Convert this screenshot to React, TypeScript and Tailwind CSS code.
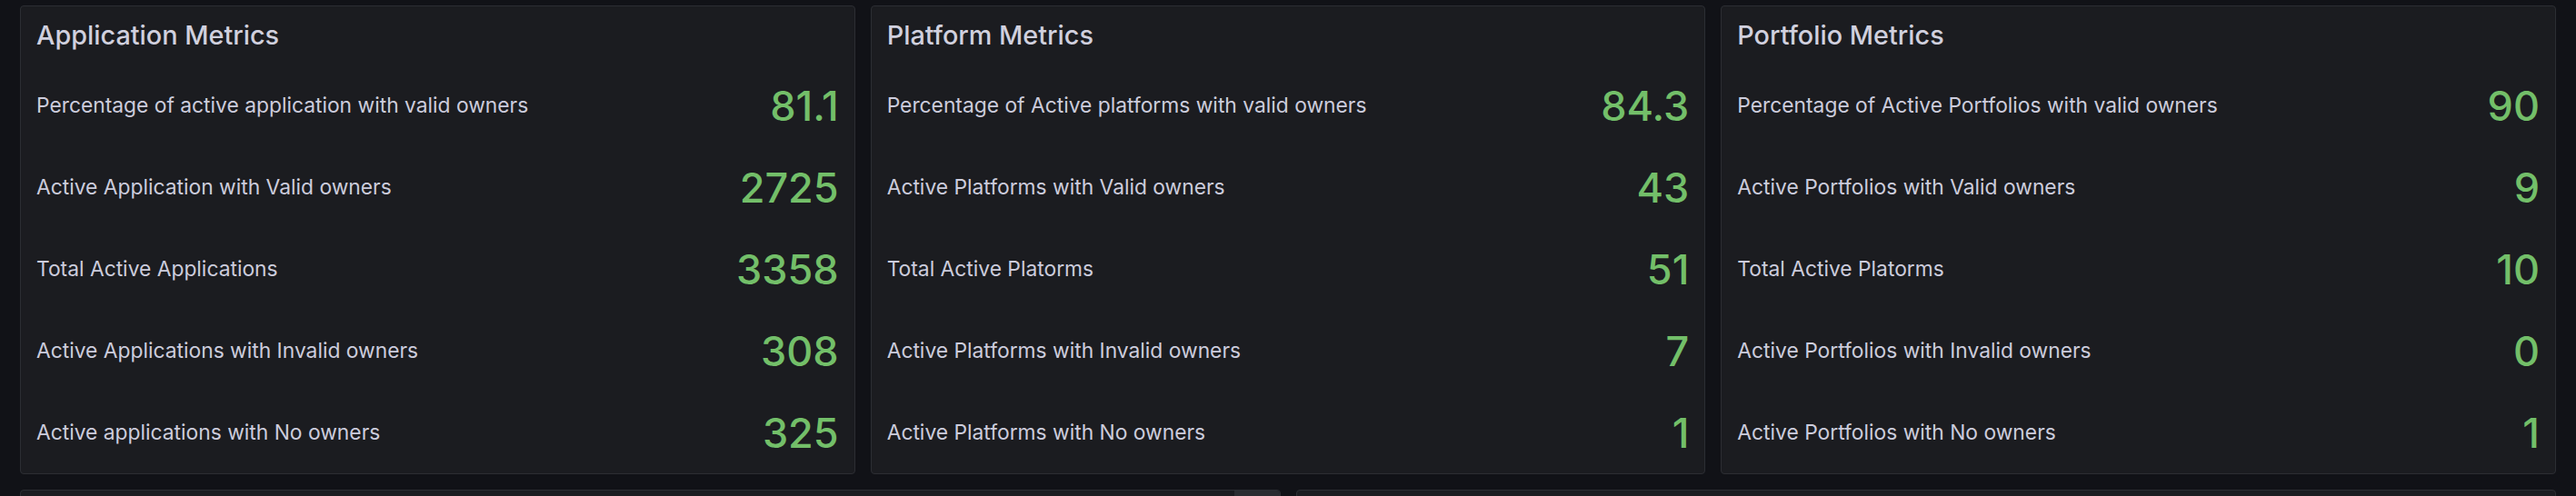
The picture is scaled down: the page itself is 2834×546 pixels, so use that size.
import React from 'react';

type Metric = { label: string; value: string };

const panels: { title: string; rows: Metric[] }[] = [
  {
    title: 'Application Metrics',
    rows: [
      { label: 'Percentage of active application with valid owners', value: '81.1' },
      { label: 'Active Application with Valid owners', value: '2725' },
      { label: 'Total Active Applications', value: '3358' },
      { label: 'Active Applications with Invalid owners', value: '308' },
      { label: 'Active applications with No owners', value: '325' },
    ],
  },
  {
    title: 'Platform Metrics',
    rows: [
      { label: 'Percentage of Active platforms with valid owners', value: '84.3' },
      { label: 'Active Platforms with Valid owners', value: '43' },
      { label: 'Total Active Platorms', value: '51' },
      { label: 'Active Platforms with Invalid owners', value: '7' },
      { label: 'Active Platforms with No owners', value: '1' },
    ],
  },
  {
    title: 'Portfolio Metrics',
    rows: [
      { label: 'Percentage of Active Portfolios with valid owners', value: '90' },
      { label: 'Active Portfolios with Valid owners', value: '9' },
      { label: 'Total Active Platorms', value: '10' },
      { label: 'Active Portfolios with Invalid owners', value: '0' },
      { label: 'Active Portfolios with No owners', value: '1' },
    ],
  },
];

function MetricsPanel({ title, rows }: { title: string; rows: Metric[] }) {
  return (
    <div className="rounded-[4px] border border-[#2c2e33] bg-[#1b1c20]">
      {/* Header */}
      <div className="flex h-[64px] items-center px-[17px]">
        <h2 className="text-[28.8px] font-medium leading-none text-[#d0d0de]">{title}</h2>
      </div>
      {/* Stat rows */}
      <div className="flex flex-col">
        {rows.map((r) => (
          <div key={r.label} className="flex h-[90px] items-center justify-between pl-[17px] pr-[17px]">
            <span className="text-[22.8px] leading-none text-[#ccccdc]">{r.label}</span>
            <span className="text-[45px] font-medium leading-none text-[#73bf69]">{r.value}</span>
          </div>
        ))}
      </div>
    </div>
  );
}

export default function App() {
  return (
    <div
      className="h-[546px] overflow-hidden bg-[#111217] px-[22px] pt-[6px]"
      style={{ fontFamily: 'Inter, "Noto Sans", sans-serif' }}
    >
      <div className="grid grid-cols-3 gap-[17px]">
        {panels.map((p) => (
          <MetricsPanel key={p.title} title={p.title} rows={p.rows} />
        ))}
      </div>

      {/* Next row of panels, cut off by the window */}
      <div className="mt-[17px] grid grid-cols-2 gap-[17px]">
        <div className="flex h-[120px] justify-end rounded-[4px] border border-[#2c2e33] bg-[#1b1c20]">
          <div className="h-[40px] w-[50px] rounded-tr-[4px] bg-[#2a2c31]" />
        </div>
        <div className="h-[120px] rounded-[4px] border border-[#2c2e33] bg-[#1b1c20]" />
      </div>
    </div>
  );
}
